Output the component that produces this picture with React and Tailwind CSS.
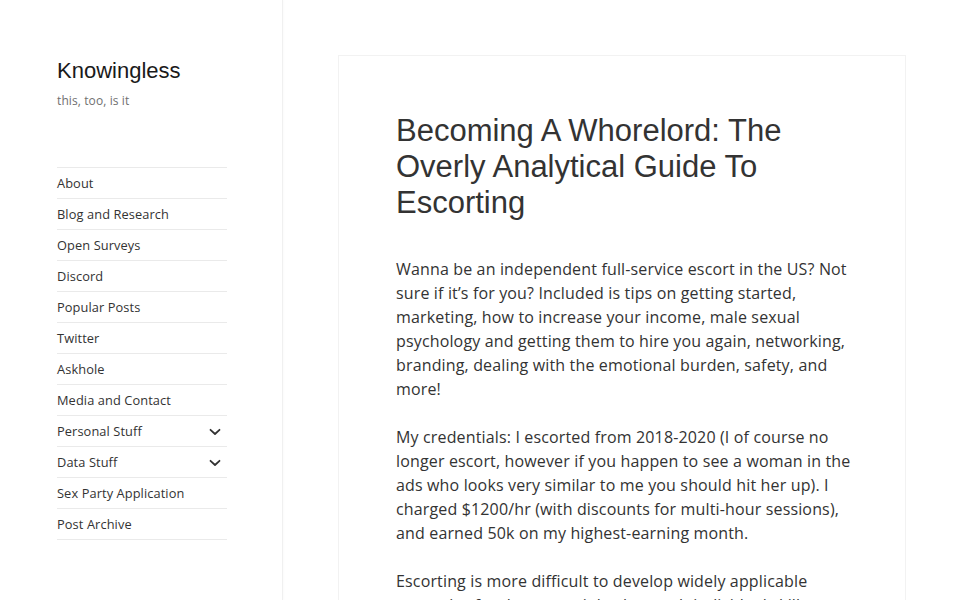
import React from "react";

const navItems = [
  { label: "About" },
  { label: "Blog and Research" },
  { label: "Open Surveys" },
  { label: "Discord" },
  { label: "Popular Posts" },
  { label: "Twitter" },
  { label: "Askhole" },
  { label: "Media and Contact" },
  { label: "Personal Stuff", sub: true },
  { label: "Data Stuff", sub: true },
  { label: "Sex Party Application" },
  { label: "Post Archive" },
];

const body = "font-['Open_Sans',sans-serif]";

function Chevron() {
  return (
    <svg width="12" height="8" viewBox="0 0 12 8" className="text-[#333]">
      <path d="M1.5 1.8 L6 6 L10.5 1.8" fill="none" stroke="currentColor" strokeWidth="1.8" strokeLinecap="round" strokeLinejoin="round" />
    </svg>
  );
}

function Sidebar() {
  return (
    <aside className="w-[283px] shrink-0 min-h-[600px] bg-white border-r border-[#f0f0f0] shadow-[1px_0_2px_rgba(0,0,0,0.02)]">
      <div className="pl-[57px] pr-[57px] pt-[58px]">
        <div className="font-['Liberation_Sans',Arial,sans-serif] text-[22px] leading-[26px] text-[#1a1a1a]">
          Knowingless
        </div>
        <div className={`${body} mt-[8px] text-[12px] leading-[18px] tracking-[0.1px] text-[#707070]`}>this, too, is it</div>
        <nav className="mt-[57px] w-[170px] border-t border-[#eaeaea]">
          {navItems.map((item) => (
            <div
              key={item.label}
              className={`${body} flex h-[31px] items-center justify-between border-b border-[#eaeaea] pt-[2px] text-[12.8px] text-[#333] tracking-[0.1px]`}
            >
              <span>{item.label}</span>
              {item.sub && (
                <span className="mr-[6px] flex items-center">
                  <Chevron />
                </span>
              )}
            </div>
          ))}
        </nav>
      </div>
    </aside>
  );
}

function Article() {
  return (
    <article className="mt-[55px] ml-[55px] w-[568px] min-h-[560px] border border-[#f2f2f2] bg-white px-[57px] pt-[57px]">
      <h1 className="font-['Liberation_Sans',Arial,sans-serif] text-[31px] leading-[36px] tracking-[0px] text-[#333]">
        Becoming A Whorelord: The
        <br />
        Overly Analytical Guide To
        <br />
        Escorting
      </h1>
      <div className={`${body} mt-[36px] text-[16px] leading-[24px] tracking-[0.15px] text-[#333]`}>
        <p className="whitespace-nowrap">
          Wanna be an independent full-service escort in the US? Not
          <br />
          sure if it’s for you? Included is tips on getting started,
          <br />
          marketing, how to increase your income, male sexual
          <br />
          psychology and getting them to hire you again, networking,
          <br />
          branding, dealing with the emotional burden, safety, and
          <br />
          more!
        </p>
        <p className="mt-[24px] whitespace-nowrap">
          My credentials: I escorted from 2018-2020 (I of course no
          <br />
          longer escort, however if you happen to see a woman in the
          <br />
          ads who looks very similar to me you should hit her up). I
          <br />
          charged $1200/hr (with discounts for multi-hour sessions),
          <br />
          and earned 50k on my highest-earning month.
        </p>
        <p className="mt-[24px] whitespace-nowrap">
          Escorting is more difficult to develop widely applicable
          <br />
          strategies for than most jobs, but each individual skill can
        </p>
      </div>
    </article>
  );
}

export default function App() {
  return (
    <div className="flex h-[600px] overflow-hidden bg-white">
      <Sidebar />
      <Article />
    </div>
  );
}
